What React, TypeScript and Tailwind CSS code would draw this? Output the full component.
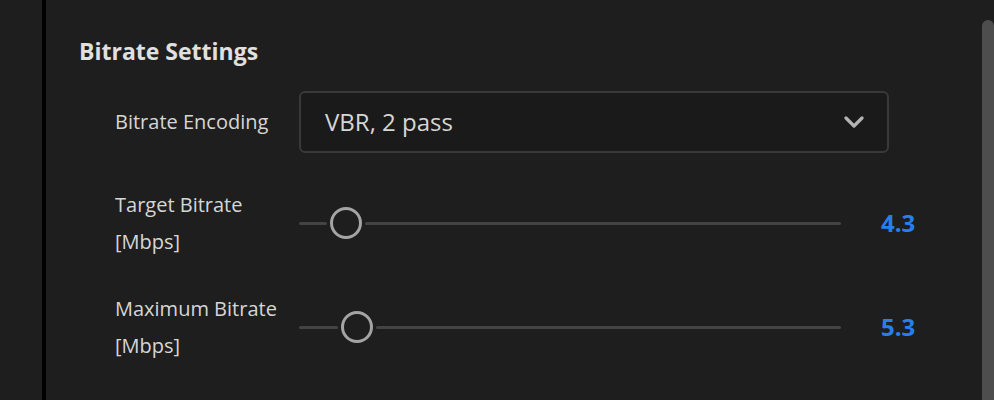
const sliders = [
  { label: 'Target Bitrate', unit: '[Mbps]', value: '4.3', offset: 28 },
  { label: 'Maximum Bitrate', unit: '[Mbps]', value: '5.3', offset: 39 },
]

function Slider({ offset, value }: { offset: number; value: string }) {
  return (
    <div className="flex items-center">
      <div className="flex w-[542px] items-center">
        <div className="h-[3px] rounded-full bg-[#444444]" style={{ width: offset }} />
        <div className="mx-[3px] h-[32px] w-[32px] shrink-0 rounded-full border-[3px] border-[#a4a4a4]" />
        <div className="h-[3px] flex-1 rounded-full bg-[#444444]" />
      </div>
      <span className="ml-[40px] text-[24px] font-bold leading-none text-[#2680eb]">{value}</span>
    </div>
  )
}

export default function App() {
  return (
    <div
      className="flex h-[400px] w-[994px] overflow-hidden bg-[#1e1e1e]"
      style={{ fontFamily: '"Open Sans", "Noto Sans", sans-serif' }}
    >
      {/* left panel edge */}
      <div className="w-[42px] shrink-0" />
      <div className="w-[4px] shrink-0 bg-black" />

      <div className="flex-1 pl-[33px] pt-[36px]">
        <h2 className="text-[23px] font-bold leading-[30px] text-[#e0e0e0]">Bitrate Settings</h2>

        <div className="pl-[36px]">
          <div className="mt-[25px] flex items-center">
            <label className="w-[184px] shrink-0 text-[20px] leading-[36px] text-[#d6d6d6]">Bitrate Encoding</label>
            <div className="flex h-[62px] w-[590px] items-center justify-between rounded-[6px] border-2 border-[#393939] bg-[#1a1a1a] pl-[24px] pr-[23px]">
              <span className="text-[24px] leading-[32px] text-[#d6d6d6]">VBR, 2 pass</span>
              <svg width="20" height="12" viewBox="0 0 20 12" fill="none">
                <polyline points="2,2 10,10 18,2" stroke="#b4b4b4" strokeWidth="3.2" strokeLinecap="round" strokeLinejoin="round" />
              </svg>
            </div>
          </div>

          {sliders.map((s, i) => (
            <div key={s.label} className={`flex items-center ${i === 0 ? 'mt-[33px]' : 'mt-[30px]'}`}>
              <div className="w-[184px] shrink-0 text-[20px] leading-[37px] text-[#d6d6d6]">
                <div>{s.label}</div>
                <div>{s.unit}</div>
              </div>
              <Slider offset={s.offset} value={s.value} />
            </div>
          ))}
        </div>
      </div>

      {/* scrollbar */}
      <div className="mt-[20px] w-[12px] shrink-0 rounded-t-[6px] bg-[#4d4d4d]" />
    </div>
  )
}
